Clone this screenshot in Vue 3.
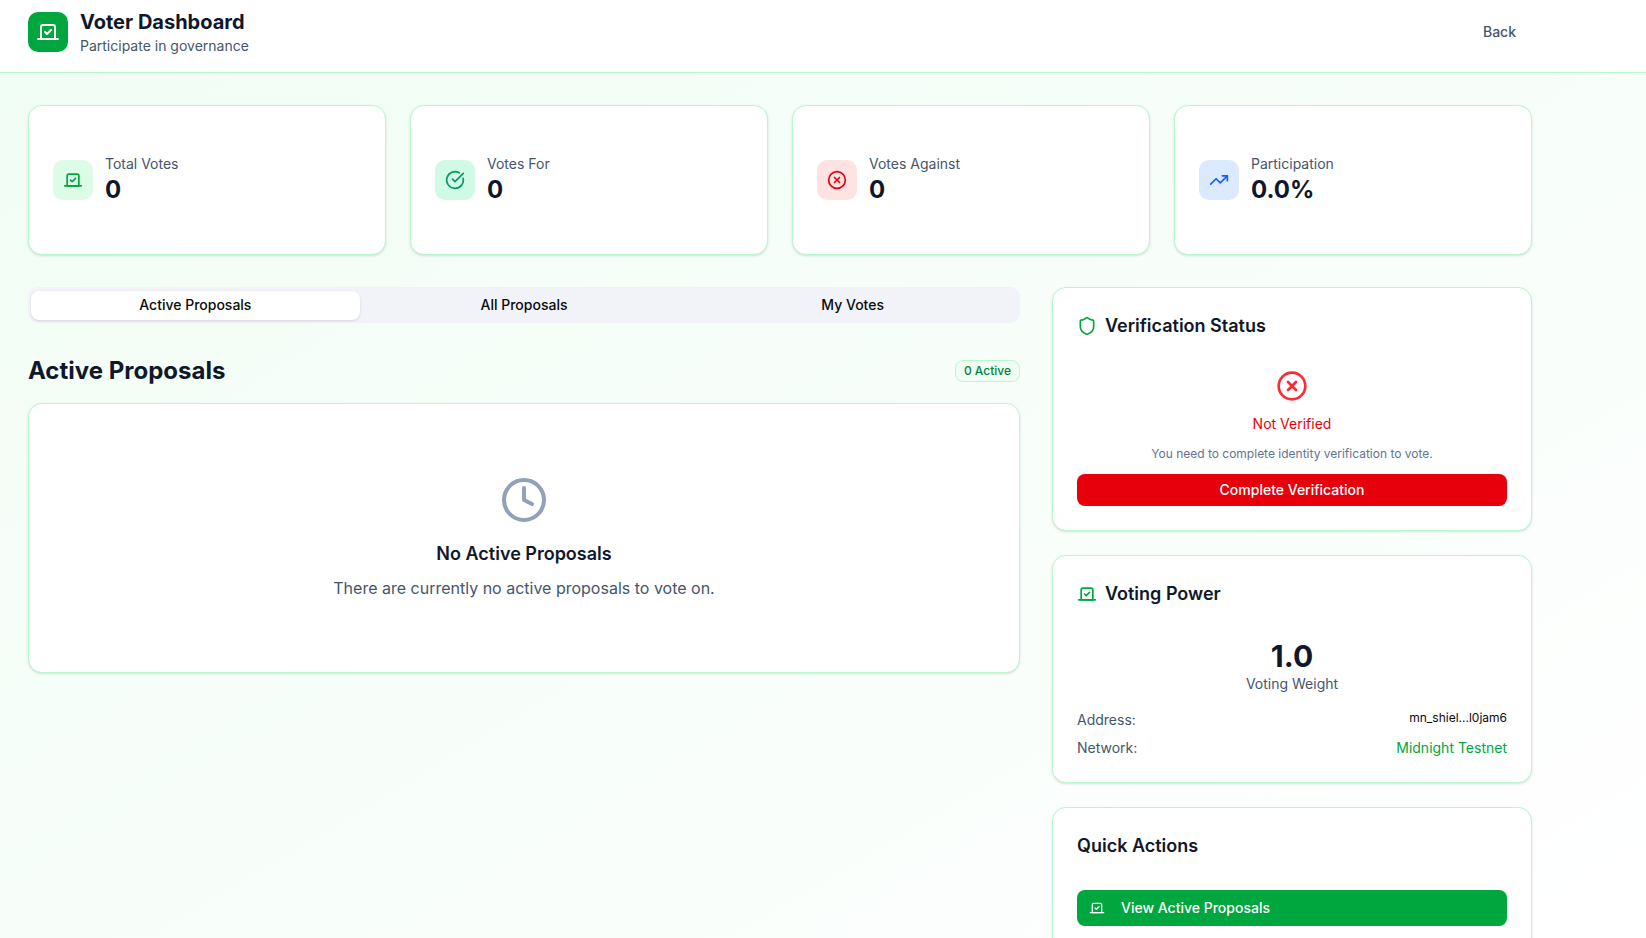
<script setup>
import { ref, h } from 'vue'

const shapes = {
  vote: ['m9 12 2 2 4-4', 'M5 7c0-1.1.9-2 2-2h10a2 2 0 0 1 2 2v12H5V7Z', 'M22 19H2'],
  check: ['M21.801 10A10 10 0 1 1 17 3.335', 'm9 11 3 3L22 4'],
  cross: ['M2 12a10 10 0 1 0 20 0a10 10 0 1 0-20 0', 'm15 9-6 6', 'm9 9 6 6'],
  trend: ['M16 7h6v6', 'm22 7-8.5 8.5-5-5L2 17'],
  shield: ['M20 13c0 5-3.5 7.5-7.66 8.95a1 1 0 0 1-.67-.01C7.5 20.5 4 18 4 13V6a1 1 0 0 1 1-1c2 0 4.5-1.2 6.24-2.72a1.17 1.17 0 0 1 1.52 0C14.51 3.81 17 5 19 5a1 1 0 0 1 1 1z'],
  clock: ['M2 12a10 10 0 1 0 20 0a10 10 0 1 0-20 0', 'M12 6v6l4 2'],
}

const Icon = ({ name, size }) =>
  h(
    'svg',
    {
      width: size,
      height: size,
      viewBox: '0 0 24 24',
      fill: 'none',
      stroke: 'currentColor',
      'stroke-width': 2,
      'stroke-linecap': 'round',
      'stroke-linejoin': 'round',
      'aria-hidden': 'true',
    },
    shapes[name].map((d) => h('path', { d })),
  )
Icon.props = ['name', 'size']

const stats = [
  { label: 'Total Votes', value: '0', icon: 'vote', tone: 'green' },
  { label: 'Votes For', value: '0', icon: 'check', tone: 'emerald' },
  { label: 'Votes Against', value: '0', icon: 'cross', tone: 'red' },
  { label: 'Participation', value: '0.0%', icon: 'trend', tone: 'blue' },
]

const tabs = ['Active Proposals', 'All Proposals', 'My Votes']
const activeTab = ref(tabs[0])
</script>

<template>
  <div class="page">
    <header class="topbar">
      <div class="brand">
        <span class="logo"><Icon name="vote" :size="24" /></span>
        <div>
          <h1>Voter Dashboard</h1>
          <p class="muted">Participate in governance</p>
        </div>
      </div>
      <button class="back" type="button">Back</button>
    </header>

    <main class="content">
      <section class="stats">
        <article v-for="stat in stats" :key="stat.label" class="card stat">
          <span class="tile" :class="stat.tone"><Icon :name="stat.icon" :size="20" /></span>
          <div>
            <p class="muted">{{ stat.label }}</p>
            <p class="value">{{ stat.value }}</p>
          </div>
        </article>
      </section>

      <div class="columns">
        <section class="proposals">
          <div class="tabs" role="tablist">
            <button
              v-for="tab in tabs"
              :key="tab"
              type="button"
              role="tab"
              class="tab"
              :class="{ active: tab === activeTab }"
              :aria-selected="tab === activeTab"
              @click="activeTab = tab"
            >
              {{ tab }}
            </button>
          </div>

          <div class="section-head">
            <h2>Active Proposals</h2>
            <span class="badge">0 Active</span>
          </div>

          <div class="card empty">
            <Icon name="clock" :size="48" />
            <h3>No Active Proposals</h3>
            <p>There are currently no active proposals to vote on.</p>
          </div>
        </section>

        <aside class="side">
          <section class="card panel">
            <h3 class="panel-title"><Icon name="shield" :size="20" />Verification Status</h3>
            <div class="verify">
              <Icon name="cross" :size="32" />
              <p class="status">Not Verified</p>
              <p class="hint">You need to complete identity verification to vote.</p>
              <button class="danger" type="button">Complete Verification</button>
            </div>
          </section>

          <section class="card panel">
            <h3 class="panel-title"><Icon name="vote" :size="20" />Voting Power</h3>
            <div class="power">
              <p class="weight">1.0</p>
              <p class="muted">Voting Weight</p>
            </div>
            <dl class="details">
              <div>
                <dt>Address:</dt>
                <dd class="address">mn_shiel...l0jam6</dd>
              </div>
              <div>
                <dt>Network:</dt>
                <dd class="network">Midnight Testnet</dd>
              </div>
            </dl>
          </section>

          <section class="card panel">
            <h3 class="panel-title">Quick Actions</h3>
            <button class="action" type="button"><Icon name="vote" :size="16" />View Active Proposals</button>
          </section>
        </aside>
      </div>
    </main>
  </div>
</template>

<style>
body {
  margin: 0;
}
</style>

<style scoped>
.page {
  min-height: 100vh;
  background: linear-gradient(to bottom right, #f0fdf4, #ffffff);
  color: #0a0a0a;
  font-family: Inter, "Liberation Sans", sans-serif;
  font-size: 16px;
  line-height: 24px;
}

.page * {
  box-sizing: border-box;
}

h1, h2, h3, p, dl, dd {
  margin: 0;
}

h1, h2, h3 {
  color: #0f172b;
}

button {
  border: 0;
  font-family: inherit;
  font-size: 14px;
  font-weight: 500;
  line-height: 20px;
  cursor: pointer;
}

svg {
  display: block;
  flex-shrink: 0;
}

.muted {
  color: #45556c;
  font-size: 14px;
  line-height: 20px;
}

.topbar {
  display: flex;
  align-items: center;
  justify-content: space-between;
  padding: 8px 114px 16px 28px;
  border-bottom: 1px solid #b9f8cf;
  background: #ffffff;
}

.brand {
  display: flex;
  align-items: center;
  gap: 12px;
}

.logo, .tile {
  display: grid;
  flex-shrink: 0;
  place-items: center;
  width: 40px;
  height: 40px;
  border-radius: 10px;
}

.logo {
  background: #00a63e;
  color: #ffffff;
}

h1 {
  font-size: 20px;
  font-weight: 700;
  line-height: 28px;
}

.back {
  padding: 8px 16px;
  border-radius: 8px;
  background: transparent;
  color: #45556c;
}

.content {
  padding: 32px 114px 32px 28px;
}

.card {
  border: 1px solid #b9f8cf;
  border-radius: 14px;
  background: #ffffff;
  box-shadow: 0 1px 3px rgba(0, 0, 0, 0.1), 0 1px 2px -1px rgba(0, 0, 0, 0.1);
}

.stats {
  display: grid;
  grid-template-columns: repeat(4, 1fr);
  gap: 24px;
  margin-bottom: 32px;
}

.stat {
  display: flex;
  align-items: center;
  gap: 12px;
  padding: 48px 24px;
}

.value {
  color: #0f172b;
  font-size: 24px;
  font-weight: 700;
  line-height: 32px;
}

.green {
  background: #dcfce7;
  color: #00a63e;
}

.emerald {
  background: #d0fae5;
  color: #009966;
}

.red {
  background: #ffe2e2;
  color: #e7000b;
}

.blue {
  background: #dbeafe;
  color: #155dfc;
}

.columns {
  display: grid;
  grid-template-columns: repeat(3, 1fr);
  align-items: start;
  gap: 32px;
}

.proposals {
  grid-column: span 2;
}

.tabs {
  display: grid;
  grid-template-columns: repeat(3, 1fr);
  padding: 4px 3px 3px;
  border-radius: 10px;
  background: #f1f3f9;
}

.tab {
  padding: 4px 8px 5px;
  border-radius: 8px;
  background: transparent;
  color: #0a0a0a;
}

.tab.active {
  background: #ffffff;
  box-shadow: 0 1px 3px rgba(0, 0, 0, 0.1), 0 1px 2px -1px rgba(0, 0, 0, 0.1);
}

.section-head {
  display: flex;
  align-items: center;
  justify-content: space-between;
  margin: 32px 0 16px;
}

h2 {
  font-size: 24px;
  font-weight: 700;
  line-height: 32px;
}

.badge {
  padding: 2px 8px;
  border: 1px solid #b9f8cf;
  border-radius: 8px;
  background: #f0fdf4;
  color: #008236;
  font-size: 12px;
  font-weight: 500;
  line-height: 16px;
}

.empty {
  display: flex;
  flex-direction: column;
  align-items: center;
  padding: 72px 24px;
  color: #90a1b9;
  text-align: center;
}

h3 {
  font-size: 18px;
  font-weight: 600;
  line-height: 28px;
}

.empty h3 {
  margin: 16px 0 8px;
}

.empty p {
  color: #45556c;
}

.side {
  display: grid;
  gap: 24px;
}

.panel {
  padding: 24px;
}

.panel-title {
  display: flex;
  align-items: center;
  gap: 8px;
  margin-bottom: 30px;
}

.panel-title svg {
  color: #00a63e;
}

.verify {
  display: flex;
  flex-direction: column;
  align-items: center;
  gap: 12px;
  color: #fb2c36;
  text-align: center;
}

.status {
  color: #e7000b;
  font-size: 14px;
  line-height: 20px;
}

.hint {
  color: #62748e;
  font-size: 12px;
  line-height: 16px;
}

.danger {
  width: 100%;
  padding: 6px 12px;
  border-radius: 8px;
  background: #e7000b;
  color: #ffffff;
}

.power {
  margin-bottom: 16px;
  text-align: center;
}

.weight {
  color: #0f172b;
  font-size: 30px;
  font-weight: 700;
  line-height: 36px;
}

.details {
  display: grid;
  gap: 8px;
  font-size: 14px;
  line-height: 20px;
}

.details div {
  display: flex;
  align-items: flex-start;
  justify-content: space-between;
}

dt {
  color: #45556c;
}

.address {
  font-size: 12px;
  line-height: 16px;
}

.network {
  color: #00a63e;
}

.action {
  display: flex;
  align-items: center;
  gap: 16px;
  width: 100%;
  padding: 8px 12px;
  border-radius: 8px;
  background: #00a63e;
  color: #ffffff;
}
</style>
